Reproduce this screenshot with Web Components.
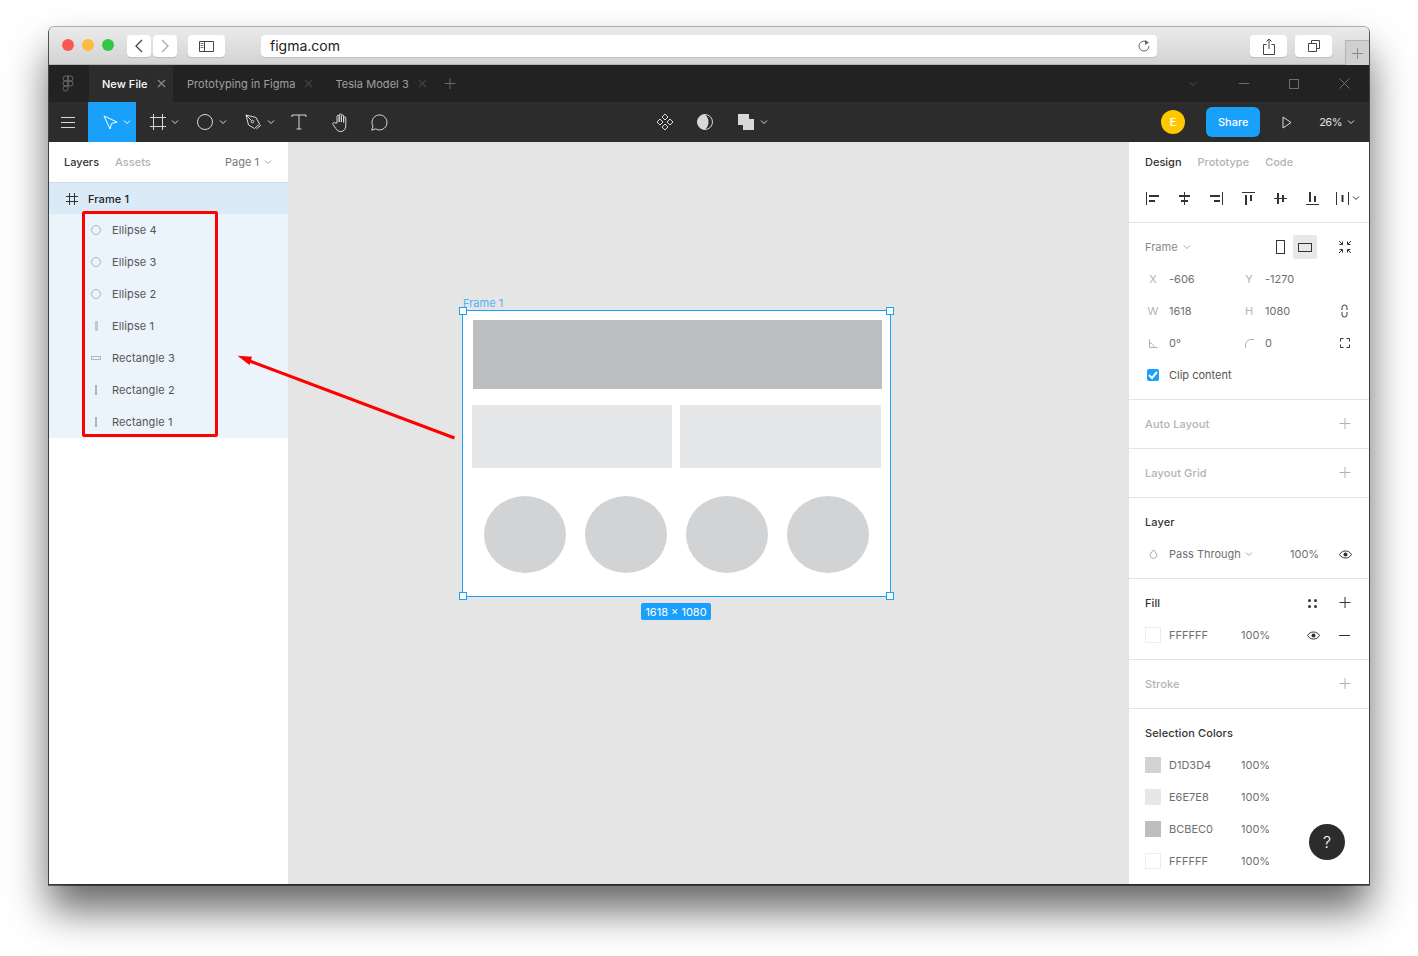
<!DOCTYPE html>
<html>
<head>
<meta charset="utf-8">
<title>Figma</title>
<style>
html, body { margin: 0; height: 100%; background: #fff; overflow: hidden; }
body { padding: 27px 49px; box-sizing: border-box; font-family: Inter, "Liberation Sans", sans-serif; }
</style>
</head>
<body>
<app-window>
  <browser-bar></browser-bar>
  <tab-strip></tab-strip>
  <tool-bar></tool-bar>
  <div style="display:flex;height:742px;">
    <layers-panel></layers-panel>
    <canvas-view></canvas-view>
    <design-panel></design-panel>
  </div>
  <red-annotation></red-annotation>
</app-window>

<script>
const ICONS = {
  chevron: '<path d="M1 1.5l3 3 3-3" fill="none" stroke="currentColor"/>',
  figma: '<g fill="none" stroke="currentColor"><path d="M6 1H3.500a2.500 2.500 0 0 0 0 5H6zM6 1h2.500a2.500 2.500 0 0 1 0 5H6zM6 6H3.500a2.500 2.500 0 0 0 0 5H6z"/><circle cx="8.500" cy="8.500" r="2.500"/><path d="M6 11H3.500a2.500 2.500 0 1 0 2.500 2.500z"/></g>',
  close: '<path d="M1 1l7 7M8 1l-7 7" fill="none" stroke="currentColor" stroke-width="1.300"/>',
  plus: '<path d="M6 0v11M.5 5.500h11" fill="none" stroke="currentColor"/>',
  winclose: '<path d="M.5.500l10 10M10.500.500l-10 10" fill="none" stroke="currentColor"/>',
  burger: '<path d="M0 .5h14M0 5.500h14M0 10.500h14" fill="none" stroke="currentColor"/>',
  move: '<path d="M1 1l13 6-5.500 1.500L7 14z" fill="none" stroke="currentColor" stroke-linejoin="round"/>',
  frame: '<path d="M3.500 0v16M12.500 0v16M0 3.500h16M0 12.500h16" fill="none" stroke="currentColor"/>',
  ellipse: '<circle cx="8" cy="8" r="7.500" fill="none" stroke="currentColor"/>',
  pen: '<g fill="none" stroke="currentColor" stroke-linejoin="round"><path d="M1 1l10 2.500 3.500 6.500-5 4.500L3.500 11z"/><path d="M1 1l5.500 5.500"/><circle cx="7.500" cy="7.500" r="1.300"/><path d="M11.500 15l4.500-4"/></g>',
  text: '<path d="M1 3V1h14v2M8 1v14M5.500 15h5" fill="none" stroke="currentColor"/>',
  hand: '<path d="M5 10V3.500a1.100 1.100 0 0 1 2.200 0V9V2a1.100 1.100 0 0 1 2.200 0v7V3a1.100 1.100 0 0 1 2.200 0v6.500V5a1.100 1.100 0 0 1 2.200 0v8c0 3-2 5.500-5 5.500-2.500 0-3.600-1-5-3L1 11.500c-.8-1.500 1-2.600 2-1.500z" fill="none" stroke="currentColor" stroke-linejoin="round"/>',
  comment: '<path d="M1.500 16.500l1.300-4a7.500 7.500 0 1 1 2.700 2.700z" fill="none" stroke="currentColor" stroke-linejoin="round" transform="translate(.2 -.3)"/>',
  component: '<g fill="none" stroke="currentColor"><path d="M9 1l3 3-3 3-3-3zM4 6l3 3-3 3-3-3zM14 6l3 3-3 3-3-3zM9 11l3 3-3 3-3-3z"/></g>',
  mask: '<circle cx="8" cy="8" r="7.500" fill="none" stroke="currentColor"/><path d="M8 .5c2.500 2 3.500 5 3.500 7.500s-1 5.500-3.500 7.500C3.500 15.500.5 12 .5 8S3.500.5 8 .5z" fill="currentColor"/>',
  boolean: '<path d="M0 0h11v5h5v11H5v-5H0z" fill="currentColor"/>',
  play: '<path d="M1 1l8 5.500-8 5.500z" fill="none" stroke="currentColor" stroke-linejoin="round"/>',
  back: '<path d="M7 1L1 7l6 6" fill="none" stroke="currentColor" stroke-width="1.300"/>',
  fwd: '<path d="M1 1l6 6-6 6" fill="none" stroke="currentColor" stroke-width="1.300"/>',
  sidebar: '<path d="M.5.500h14v10H.5zM5.500.500v10" fill="none" stroke="currentColor"/><path d="M1.500 2.500h3M1.500 4.500h3M1.500 6.500h3" stroke="currentColor" stroke-width=".7"/>',
  reload: '<path d="M9.500 2.500A5 5 0 1 0 11 6" fill="none" stroke="currentColor"/><path d="M7 0l4 2.500L7 5z" fill="currentColor"/>',
  share: '<path d="M3.500 6.500H.5v10h11v-10h-3M6 11V1M3.500 3.500L6 1l2.500 2.500" fill="none" stroke="currentColor"/>',
  tabs: '<path d="M.5 3.500h8v8h-8zM3.500 3.500v-3h8v8h-3" fill="none" stroke="currentColor"/>',
  alignl: '<path d="M.5 0v13" stroke="currentColor"/><path d="M3 3h10v2H3zM3 8h6v2H3z" fill="currentColor"/>',
  alignc: '<path d="M6.500 0v13" stroke="currentColor"/><path d="M1 3h11v2H1zM3 8h7v2H3z" fill="currentColor"/>',
  alignr: '<path d="M12.500 0v13" stroke="currentColor"/><path d="M0 3h10v2H0zM4 8h6v2H4z" fill="currentColor"/>',
  alignt: '<path d="M0 .5h13" stroke="currentColor"/><path d="M3 3h2v10H3zM8 3h2v6H8z" fill="currentColor"/>',
  alignm: '<path d="M0 6.500h13" stroke="currentColor"/><path d="M3 1h2v11H3zM8 3h2v7H8z" fill="currentColor"/>',
  alignb: '<path d="M0 12.500h13" stroke="currentColor"/><path d="M3 0h2v10H3zM8 4h2v6H8z" fill="currentColor"/>',
  distribute: '<path d="M.5 0v13M12.500 0v13" stroke="currentColor"/><path d="M5.500 3h2v7h-2z" fill="currentColor"/>',
  portrait: '<rect x=".5" y=".5" width="8" height="13" fill="none" stroke="currentColor"/>',
  landscape: '<rect x=".5" y=".5" width="13" height="8" fill="none" stroke="currentColor"/>',
  shrink: '<path d="M1 1l3.500 3.500M4.500 1.500v3h-3M13 1L9.500 4.500M9.500 1.500v3h3M1 13l3.500-3.500M4.500 12.500v-3h-3M13 13L9.500 9.500M9.500 12.500v-3h3" fill="none" stroke="currentColor"/>',
  angle: '<path d="M.5 0v8.500h8M.5 4a4.500 4.500 0 0 1 4.500 4.500" fill="none" stroke="currentColor"/>',
  radius: '<path d="M.5 9V6a5.500 5.500 0 0 1 5.500-5.500h3" fill="none" stroke="currentColor"/>',
  corners: '<path d="M.5 3.500v-3h3M6.500.5h3v3M9.500 6.500v3h-3M3.500 9.500h-3v-3" fill="none" stroke="currentColor"/>',
  constrain: '<path d="M1 6V3.500a2.500 2.500 0 0 1 5 0V6M1 8v2.500a2.500 2.500 0 0 0 5 0V8" fill="none" stroke="currentColor"/>',
  drop: '<path d="M4.500.8L7 4a3.300 3.300 0 1 1-5 0z" fill="none" stroke="currentColor"/>',
  eye: '<path d="M.5 4.500C2 2 4 1 6.500 1s4.500 1 6 3.500c-1.500 2.500-3.500 3.500-6 3.500S2 7 .5 4.500z" fill="none" stroke="currentColor"/><circle cx="6.500" cy="4.500" r="2" fill="currentColor"/>',
  styles: '<g fill="currentColor"><circle cx="1.500" cy="1.500" r="1.500"/><circle cx="7.500" cy="1.500" r="1.500"/><circle cx="1.500" cy="7.500" r="1.500"/><circle cx="7.500" cy="7.500" r="1.500"/></g>',
  minus: '<path d="M0 .5h11" stroke="currentColor"/>',
  check: '<path d="M1 4l3 3 5-6" fill="none" stroke="#fff" stroke-width="2"/>',
  hash: '<path d="M3.500 0v12M8.500 0v12M0 3.500h12M0 8.500h12" fill="none" stroke="currentColor"/>',
  bar: '<path d="M0 0h3v10H0z" fill="currentColor"/>',
  thin: '<path d="M0 0h2v10H0z" fill="currentColor"/>',
  flat: '<rect x=".5" y=".5" width="9" height="3" fill="none" stroke="currentColor"/>',
  ring: '<circle cx="5" cy="5" r="4.500" fill="none" stroke="currentColor"/>',
  winmin: '<path d="M0 .5h10" stroke="currentColor"/>',
  winmax: '<rect x=".5" y=".5" width="9" height="9" fill="none" stroke="currentColor"/>',
  newtab: '<path d="M5.500 0v11M0 5.500h11" stroke="currentColor"/>'
};

class FigIcon extends HTMLElement {
  connectedCallback() {
    const w = this.getAttribute("w") || 16;
    const h = this.getAttribute("h") || w;
    const root = this.attachShadow({mode: "open"});
    root.innerHTML = `
<style>
:host { display: inline-flex; flex: none; width: ${w}px; height: ${h}px; }
svg { display: block; overflow: visible; }
</style>
<svg width="${w}" height="${h}" viewBox="0 0 ${w} ${h}">${ICONS[this.getAttribute("name")]}</svg>`;
  }
}

class AppWindow extends HTMLElement {
  constructor() {
    super();
    this.attachShadow({mode: "open"}).innerHTML = `
<style>
:host {
  display: block;
  position: relative;
  width: 1320px;
  height: 857px;
  border-radius: 5px 5px 0 0;
  box-shadow: 0 0 0 1px rgba(0,0,0,0.3), 0 1px 0 1px rgba(0,0,0,0.5), 0 26px 40px rgba(0,0,0,0.6);
  font: 11px Inter, "Liberation Sans", sans-serif;
}
</style>
<slot></slot>`;
  }
}

class BrowserBar extends HTMLElement {
  constructor() {
    super();
    this.attachShadow({mode: "open"}).innerHTML = `
<style>
:host {
  display: flex;
  align-items: flex-start;
  box-sizing: border-box;
  height: 38px;
  padding-top: 8px;
  background: linear-gradient(#ebebeb, #d3d3d3);
  border-bottom: 1px solid #b4b4b4;
  border-radius: 5px 5px 0 0;
  color: #444;
}
.lights { display: flex; gap: 8px; padding: 4px 0 0 13px; width: 65px; box-sizing: content-box; }
.lights i { width: 12px; height: 12px; border-radius: 50%; }
.btn {
  display: flex; align-items: center; justify-content: center;
  height: 22px;
  background: #fff;
  border-radius: 4px;
  box-shadow: 0 1px 0 #bdbdbd;
}
.url {
  width: 896px; margin-left: 36px; box-sizing: border-box;
  justify-content: space-between;
  padding: 0 7px 0 9px;
  font-size: 14px; color: #222;
}
.url span { padding-bottom: 2px; }
.tab {
  position: absolute; right: 0; top: 13px;
  width: 24px; height: 25px; box-sizing: border-box;
  display: flex; align-items: center; justify-content: center;
  border: 1px solid #b4b4b4; border-right: 0; border-bottom: 0;
  background: #cfcfcf; color: #8a8a8a;
}
</style>
<div class="lights">
  <i style="background:#fc5753"></i><i style="background:#fdbc40"></i><i style="background:#33c748"></i>
</div>
<div class="btn" style="width:24px"><fig-icon name="back" w="8" h="14"></fig-icon></div>
<div class="btn" style="width:24px;margin-left:2px;color:#aaa"><fig-icon name="fwd" w="8" h="14"></fig-icon></div>
<div class="btn" style="width:37px;margin-left:11px"><fig-icon name="sidebar" w="15" h="11"></fig-icon></div>
<div class="btn url"><span>figma.com</span><fig-icon name="reload" w="12" h="12" style="color:#666"></fig-icon></div>
<div class="btn" style="width:37px;margin-left:93px"><fig-icon name="share" w="12" h="17"></fig-icon></div>
<div class="btn" style="width:37px;margin-left:8px"><fig-icon name="tabs" w="12" h="12"></fig-icon></div>
<div class="tab"><fig-icon name="newtab" w="11" h="11"></fig-icon></div>`;
  }
}

class TabStrip extends HTMLElement {
  constructor() {
    super();
    this.attachShadow({mode: "open"}).innerHTML = `
<style>
:host {
  display: flex;
  align-items: stretch;
  height: 37px;
  background: #222;
  color: #a0a0a0;
}
.logo { width: 40px; box-sizing: border-box; padding-right: 2px; display: flex; align-items: center; justify-content: center; color: #6a6a6a; }
.tab { display: flex; align-items: center; padding-left: 14px; white-space: nowrap; letter-spacing: 0.005em; }
.tab fig-icon { color: #3f3f3f; margin-left: 9px; }
.active { background: #2c2c2c; color: #fff; font-weight: 500; width: 84px; box-sizing: border-box; padding-left: 13px; }
.active fig-icon { color: #8a8a8a; }
.plus { display: flex; align-items: center; margin-left: 17px; color: #666; }
.win { margin-left: auto; display: flex; align-items: center; color: #6e6e6e; }
.win span { width: 50px; display: flex; justify-content: center; }
</style>
<div class="logo"><fig-icon name="figma" w="12" h="18"></fig-icon></div>
<div class="tab active">New File<fig-icon name="close" w="9" h="9"></fig-icon></div>
<div class="tab">Prototyping in Figma<fig-icon name="close" w="9" h="9"></fig-icon></div>
<div class="tab" style="padding-left:22px">Tesla Model 3<fig-icon name="close" w="9" h="9"></fig-icon></div>
<div class="plus"><fig-icon name="plus" w="12" h="12"></fig-icon></div>
<div class="win">
  <span><fig-icon name="chevron" w="10" h="6" style="color:#555"></fig-icon></span>
  <span><fig-icon name="winmin" w="10" h="1"></fig-icon></span>
  <span><fig-icon name="winmax" w="10" h="10"></fig-icon></span>
  <span><fig-icon name="winclose" w="11" h="11"></fig-icon></span>
</div>`;
  }
}

class ToolBar extends HTMLElement {
  constructor() {
    super();
    this.attachShadow({mode: "open"}).innerHTML = `
<style>
:host {
  display: flex;
  align-items: stretch;
  height: 40px;
  background: #2c2c2c;
  color: #d8d8d8;
}
.t { display: flex; align-items: center; justify-content: center; box-sizing: border-box; }
.c { justify-content: flex-start; gap: 6px; }
.sel { background: #18a0fb; color: #fff; }
.right { margin-left: auto; display: flex; align-items: center; }
.avatar {
  width: 24px; height: 24px; border-radius: 50%;
  background: #ffc700; color: #fff; font-weight: 500;
  display: flex; align-items: center; justify-content: center;
}
.share {
  margin-left: 21px; width: 54px; height: 30px; border-radius: 6px;
  background: #18a0fb; color: #fff; font-weight: 500;
  display: flex; align-items: center; justify-content: center;
}
.zoom { display: flex; align-items: center; gap: 5px; margin: 0 14px 0 0; color: #e0e0e0; letter-spacing: -0.5px; }
</style>
<div class="t" style="width:39px;padding-right:2px"><fig-icon name="burger" w="14" h="11"></fig-icon></div>
<div class="t c sel" style="width:48px;padding-left:15px;gap:5px"><fig-icon name="move" w="15" h="15"></fig-icon><fig-icon name="chevron" w="8" h="6"></fig-icon></div>
<div class="t c" style="width:48px;padding-left:14px;gap:5px"><fig-icon name="frame"></fig-icon><fig-icon name="chevron" w="8" h="6"></fig-icon></div>
<div class="t c" style="width:48px;padding-left:13px"><fig-icon name="ellipse"></fig-icon><fig-icon name="chevron" w="8" h="6"></fig-icon></div>
<div class="t c" style="width:48px;padding-left:13px"><fig-icon name="pen"></fig-icon><fig-icon name="chevron" w="8" h="6"></fig-icon></div>
<div class="t" style="width:40px;padding-right:2px"><fig-icon name="text"></fig-icon></div>
<div class="t" style="width:40px;padding-left:1px"><fig-icon name="hand" w="18" h="19"></fig-icon></div>
<div class="t" style="width:40px;padding-right:2px"><fig-icon name="comment" w="18" h="17"></fig-icon></div>
<div style="width:245px"></div>
<div class="t" style="width:40px"><fig-icon name="component" w="18" h="18"></fig-icon></div>
<div class="t" style="width:40px"><fig-icon name="mask"></fig-icon></div>
<div class="t c" style="width:52px;padding-left:13px"><fig-icon name="boolean"></fig-icon><fig-icon name="chevron" w="8" h="6"></fig-icon></div>
<div class="right">
  <div class="avatar">E</div>
  <div class="share">Share</div>
  <fig-icon name="play" w="10" h="13" style="margin:0 27px 0 22px;color:#ddd"></fig-icon>
  <div class="zoom">26%<fig-icon name="chevron" w="8" h="6"></fig-icon></div>
</div>`;
  }
}

class LayerRow extends HTMLElement {
  constructor() {
    super();
    this.attachShadow({mode: "open"}).innerHTML = `
<style>
:host {
  display: flex;
  align-items: center;
  height: 32px;
  padding-left: 39px;
  background: #ebf3fb;
  color: #555;
  letter-spacing: 0.01em;
}
.ic { width: 16px; height: 16px; margin-right: 8px; display: flex; align-items: center; justify-content: center; color: #b5b5b5; }
:host([top]) { height: 31px; padding-left: 15px; background: #daebf7; color: #222; font-weight: 500; }
:host([top]) .ic { color: #333; }
</style>
<div class="ic"><slot name="icon"></slot></div>
<slot></slot>`;
  }
}

class LayersPanel extends HTMLElement {
  constructor() {
    super();
    this.attachShadow({mode: "open"}).innerHTML = `
<style>
:host { display: block; width: 239px; flex: none; background: #fff; color: #333; }
.head {
  display: flex; align-items: center; box-sizing: border-box;
  height: 41px; padding: 0 16px 1px 15px;
  border-bottom: 1px solid #d0dde8;
  font-weight: 500;
}
.muted { color: #b3b3b3; margin-left: 16px; }
.page { margin-left: auto; display: flex; align-items: center; gap: 5px; color: #777; font-weight: 400; }
.page fig-icon { color: #aaa; }
</style>
<div class="head">
  <span>Layers</span><span class="muted">Assets</span>
  <span class="page">Page 1<fig-icon name="chevron" w="8" h="6"></fig-icon></span>
</div>
<layer-row top><fig-icon slot="icon" name="hash" w="12" h="12"></fig-icon>Frame 1</layer-row>
<layer-row><fig-icon slot="icon" name="ring" w="10" h="10"></fig-icon>Ellipse 4</layer-row>
<layer-row><fig-icon slot="icon" name="ring" w="10" h="10"></fig-icon>Ellipse 3</layer-row>
<layer-row><fig-icon slot="icon" name="ring" w="10" h="10"></fig-icon>Ellipse 2</layer-row>
<layer-row><fig-icon slot="icon" name="bar" w="3" h="10" style="color:#c8c8c8"></fig-icon>Ellipse 1</layer-row>
<layer-row><fig-icon slot="icon" name="flat" w="10" h="4"></fig-icon>Rectangle 3</layer-row>
<layer-row><fig-icon slot="icon" name="thin" w="2" h="10"></fig-icon>Rectangle 2</layer-row>
<layer-row><fig-icon slot="icon" name="thin" w="2" h="10"></fig-icon>Rectangle 1</layer-row>`;
  }
}

class CanvasView extends HTMLElement {
  constructor() {
    super();
    const ellipses = [21, 122, 223, 324].map(x => `<div class="shape" style="left:${x}px;top:185px;width:82px;height:77px;border-radius:50%;background:#d1d3d4"></div>`).join("");
    this.attachShadow({mode: "open"}).innerHTML = `
<style>
:host { display: block; position: relative; flex: 1; background: #e5e5e5; color: #18a0fb; }
.label { position: absolute; left: 175px; top: 154px; line-height: 14px; opacity: 0.75; }
.frame {
  position: absolute; left: 174px; top: 168px;
  width: 429px; height: 287px; box-sizing: border-box;
  background: #fff; border: 1px solid #18a0fb;
}
.shape { position: absolute; }
.h { position: absolute; width: 8px; height: 8px; box-sizing: border-box; background: #fff; border: 1px solid #18a0fb; }
.size {
  position: absolute; left: 353px; top: 461px;
  width: 70px; height: 17px;
  display: flex; align-items: center; justify-content: center;
  background: #18a0fb; color: #fff; border-radius: 2px;
}
</style>
<div class="label">Frame 1</div>
<div class="frame">
  <div class="shape" style="left:10px;top:9px;width:409px;height:69px;background:#bcbec0"></div>
  <div class="shape" style="left:9px;top:94px;width:200px;height:63px;background:#e6e7e8"></div>
  <div class="shape" style="left:217px;top:94px;width:201px;height:63px;background:#e6e7e8"></div>
  ${ellipses}
  <div class="h" style="left:-4px;top:-4px"></div>
  <div class="h" style="right:-4px;top:-4px"></div>
  <div class="h" style="left:-4px;bottom:-4px"></div>
  <div class="h" style="right:-4px;bottom:-4px"></div>
</div>
<div class="size">1618 × 1080</div>`;
  }
}

class PanelSection extends HTMLElement {
  constructor() {
    super();
    this.attachShadow({mode: "open"}).innerHTML = `
<style>
:host { display: block; padding: 8px 0; border-bottom: 1px solid #e5e5e5; }
:host([last]) { border-bottom: 0; }
</style>
<slot></slot>`;
  }
}

class SectionHead extends HTMLElement {
  constructor() {
    super();
    const icons = (this.getAttribute("icons") || "").split(" ").filter(Boolean);
    this.attachShadow({mode: "open"}).innerHTML = `
<style>
:host { display: flex; align-items: center; height: 32px; padding: 0 18px 0 16px; color: #333; font-weight: 500; letter-spacing: 0.01em; }
:host([off]) { color: #b3b3b3; }
.r { margin-left: auto; display: flex; align-items: center; gap: 22px; }
.p { color: #333; }
:host([off]) .p { color: #b3b3b3; }
</style>
<slot></slot>
<div class="r">${icons.map(n => `<fig-icon class="p" name="${n}" w="${n === "styles" ? 9 : 12}" h="${n === "styles" ? 9 : 12}"></fig-icon>`).join("")}</div>`;
  }
}

class PropRow extends HTMLElement {
  constructor() {
    super();
    this.attachShadow({mode: "open"}).innerHTML = `
<style>
:host {
  display: grid;
  grid-template-columns: 24px 72px 24px 68px 24px;
  align-items: center;
  height: 32px;
  padding-left: 16px;
  color: #6f6f6f;
}
::slotted(.l) { color: #b3b3b3; width: 16px; display: flex; justify-content: center; }
::slotted(.x) { color: #333; display: flex; justify-content: center; }
</style>
<slot></slot>`;
  }
}

class ColorRow extends HTMLElement {
  constructor() {
    super();
    const c = this.getAttribute("color");
    this.attachShadow({mode: "open"}).innerHTML = `
<style>
:host { display: flex; align-items: center; height: 32px; padding-left: 16px; color: #6f6f6f; }
.sw { width: 16px; height: 16px; box-sizing: border-box; margin-right: 8px; background: #${c}; border: ${c === "FFFFFF" ? "1px solid #eee" : "0"}; }
.hex { width: 72px; }
.rest { margin-left: 37px; display: flex; align-items: center; gap: 19px; color: #333; }
</style>
<div class="sw"></div><span class="hex">${c}</span><span>100%</span><div class="rest"><slot></slot></div>`;
  }
}

class DesignPanel extends HTMLElement {
  constructor() {
    super();
    this.attachShadow({mode: "open"}).innerHTML = `
<style>
:host { display: block; position: relative; width: 240px; flex: none; background: #fff; }
.tabs { display: flex; align-items: center; gap: 16px; height: 40px; padding-left: 16px; color: #b3b3b3; font-weight: 500; }
.tabs b { color: #333; font-weight: 500; }
.aligns { display: flex; height: 32px; padding: 0 0 8px 17px; border-bottom: 1px solid #e5e5e5; align-items: center; gap: 19px; color: #333; }
.aligns .d { display: flex; align-items: center; gap: 3px; margin-left: -2px; }
.on { width: 24px; height: 24px; background: #e8e8e8; border-radius: 2px; display: flex; align-items: center; justify-content: center; }
.orient { display: flex; align-items: center; color: #333; }
.frame-row { display: flex; align-items: center; height: 32px; padding-left: 16px; color: #8a8a8a; }
.frame-row .c { display: flex; align-items: center; gap: 5px; width: 131px; }
.frame-row .c fig-icon { color: #aaa; }
.check { width: 12px; height: 12px; background: #18a0fb; border-radius: 2px; display: flex; align-items: center; justify-content: center; margin: 0 10px 0 2px; }
.help {
  position: absolute; right: 24px; bottom: 24px;
  width: 36px; height: 36px; border-radius: 50%;
  background: #2c2c2c; color: #fff; font-size: 16px; font-weight: 300;
  display: flex; align-items: center; justify-content: center;
}
.clip { display: flex; align-items: center; height: 32px; padding-left: 16px; color: #555; }
.layer { display: flex; align-items: center; height: 32px; padding-left: 20px; color: #6f6f6f; }
.layer .name { display: flex; align-items: center; gap: 4px; margin-left: 11px; width: 121px; }
.layer .name fig-icon { color: #aaa; }
</style>
<div class="tabs"><b>Design</b><span>Prototype</span><span>Code</span></div>
<div class="aligns">
  <fig-icon name="alignl" w="13" h="13"></fig-icon>
  <fig-icon name="alignc" w="13" h="13"></fig-icon>
  <fig-icon name="alignr" w="13" h="13"></fig-icon>
  <fig-icon name="alignt" w="13" h="13"></fig-icon>
  <fig-icon name="alignm" w="13" h="13"></fig-icon>
  <fig-icon name="alignb" w="13" h="13"></fig-icon>
  <span class="d"><fig-icon name="distribute" w="13" h="13"></fig-icon><fig-icon name="chevron" w="8" h="6"></fig-icon></span>
</div>
<panel-section>
  <div class="frame-row">
    <div class="c">Frame<fig-icon name="chevron" w="8" h="6"></fig-icon></div>
    <div class="orient">
      <fig-icon name="portrait" w="9" h="14" style="margin-right:8px"></fig-icon>
      <div class="on"><fig-icon name="landscape" w="14" h="9"></fig-icon></div>
      <fig-icon name="shrink" w="14" h="14" style="margin-left:21px"></fig-icon>
    </div>
  </div>
  <prop-row><span class="l">X</span><span>-606</span><span class="l">Y</span><span>-1270</span></prop-row>
  <prop-row><span class="l">W</span><span>1618</span><span class="l">H</span><span>1080</span><span class="x" style="padding-right:2px"><fig-icon name="constrain" w="7" h="14"></fig-icon></span></prop-row>
  <prop-row><span class="l"><fig-icon name="angle" w="9" h="9"></fig-icon></span><span>0°</span><span class="l"><fig-icon name="radius" w="9" h="9"></fig-icon></span><span>0</span><span class="x"><fig-icon name="corners" w="10" h="10"></fig-icon></span></prop-row>
  <div class="clip"><span class="check"><fig-icon name="check" w="10" h="8"></fig-icon></span>Clip content</div>
</panel-section>
<panel-section><section-head off icons="plus">Auto Layout</section-head></panel-section>
<panel-section><section-head off icons="plus">Layout Grid</section-head></panel-section>
<panel-section>
  <section-head>Layer</section-head>
  <div class="layer">
    <fig-icon name="drop" w="9" h="10" style="color:#aaa"></fig-icon>
    <span class="name">Pass Through<fig-icon name="chevron" w="8" h="6"></fig-icon></span>
    <span>100%</span>
    <fig-icon name="eye" w="13" h="9" style="margin-left:20px;color:#333"></fig-icon>
  </div>
</panel-section>
<panel-section>
  <section-head icons="styles plus">Fill</section-head>
  <color-row color="FFFFFF"><fig-icon name="eye" w="13" h="9"></fig-icon><fig-icon name="minus" w="11" h="1"></fig-icon></color-row>
</panel-section>
<panel-section><section-head off icons="plus">Stroke</section-head></panel-section>
<panel-section last>
  <section-head>Selection Colors</section-head>
  <color-row color="D1D3D4"></color-row>
  <color-row color="E6E7E8"></color-row>
  <color-row color="BCBEC0"></color-row>
  <color-row color="FFFFFF"></color-row>
</panel-section>
<div class="help">?</div>`;
  }
}

class RedAnnotation extends HTMLElement {
  constructor() {
    super();
    this.attachShadow({mode: "open"}).innerHTML = `
<style>
:host { position: absolute; left: 0; top: 0; pointer-events: none; }
.box { position: absolute; left: 33px; top: 184px; width: 136px; height: 226px; box-sizing: border-box; border: 3px solid #ff0000; border-radius: 2px; }
svg { position: absolute; left: 0; top: 0; }
</style>
<div class="box"></div>
<svg width="500" height="500">
  <path d="M405.500 411L198 333" stroke="#ff0000" stroke-width="3"/>
  <path d="M188.500 328.700L203 329.700L200.500 338z" fill="#ff0000"/>
</svg>`;
  }
}

customElements.define("fig-icon", FigIcon);
customElements.define("layer-row", LayerRow);
customElements.define("panel-section", PanelSection);
customElements.define("section-head", SectionHead);
customElements.define("prop-row", PropRow);
customElements.define("color-row", ColorRow);
customElements.define("browser-bar", BrowserBar);
customElements.define("tab-strip", TabStrip);
customElements.define("tool-bar", ToolBar);
customElements.define("layers-panel", LayersPanel);
customElements.define("canvas-view", CanvasView);
customElements.define("design-panel", DesignPanel);
customElements.define("red-annotation", RedAnnotation);
customElements.define("app-window", AppWindow);
</script>
</body>
</html>
